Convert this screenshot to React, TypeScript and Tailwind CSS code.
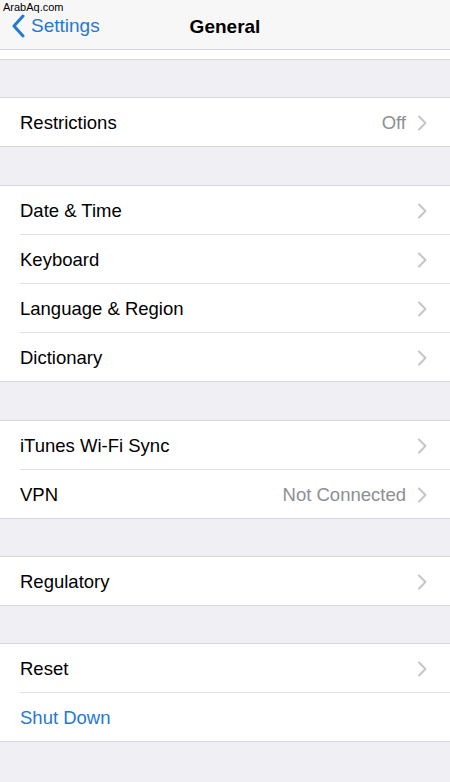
const font = { fontFamily: '"Liberation Sans", Arial, sans-serif' };

function Chevron() {
  return (
    <svg width="10" height="16" viewBox="0 0 10 16" className="shrink-0">
      <path d="M2 1.5 L8.5 8 L2 14.5" fill="none" stroke="#c4c4c9" strokeWidth="2" strokeLinecap="round" strokeLinejoin="round" />
    </svg>
  );
}

type Item = { label: string; value?: string; chevron?: boolean; blue?: boolean };

function Group({ items }: { items: Item[] }) {
  return (
    <div className="border-y border-[#d8d8dc] bg-white">
      {items.map((it, i) => (
        <div key={it.label} className="pl-5">
          <div
            className={
              "flex items-center pr-[23px] pt-[2px] " +
              (i < items.length - 1 ? "h-[49px] border-b border-[#e0e0e4]" : "h-[48px]")
            }
          >
            <span className={"flex-1 text-[18.5px] " + (it.blue ? "text-[#2479d4]" : "text-black")}>
              {it.label}
            </span>
            {it.value && <span className="mr-[11px] text-[18.5px] text-[#8e8e93]">{it.value}</span>}
            {it.chevron !== false && <Chevron />}
          </div>
        </div>
      ))}
    </div>
  );
}

function Gap({ h = "h-[38px]" }: { h?: string }) {
  return <div className={h} />;
}

export default function App() {
  return (
    <div className="relative h-[782px] w-[450px] overflow-hidden bg-[#efeff4]" style={font}>
      {/* nav bar */}
      <div className="relative flex h-[50px] items-center border-b border-[#d4d4d8] bg-[#f7f7f7] pt-[3px]">
        <div className="flex items-center pl-[12px] text-[#2479d4]">
          <svg width="13" height="24" viewBox="0 0 13 24" className="mr-[6px]">
            <path d="M11 2 L2 12 L11 22" fill="none" stroke="#2479d4" strokeWidth="3" strokeLinecap="round" strokeLinejoin="round" />
          </svg>
          <span className="text-[19px]">Settings</span>
        </div>
        <span className="absolute left-1/2 top-[13px] -translate-x-1/2 text-[19px] font-bold text-black">General</span>
        <span className="absolute left-[3px] top-[1px] text-[11px] leading-[13px] text-black">ArabAq.com</span>
      </div>
      <div className="h-[10px] border-b border-[#d8d8dc] bg-white" />
      <Gap h="h-[37px]" />
      <Group items={[{ label: "Restrictions", value: "Off" }]} />
      <Gap />
      <Group
        items={[
          { label: "Date & Time" },
          { label: "Keyboard" },
          { label: "Language & Region" },
          { label: "Dictionary" },
        ]}
      />
      <Gap />
      <Group items={[{ label: "iTunes Wi-Fi Sync" }, { label: "VPN", value: "Not Connected" }]} />
      <Gap h="h-[37px]" />
      <Group items={[{ label: "Regulatory" }]} />
      <Gap h="h-[37px]" />
      <Group items={[{ label: "Reset" }, { label: "Shut Down", blue: true, chevron: false }]} />
    </div>
  );
}
